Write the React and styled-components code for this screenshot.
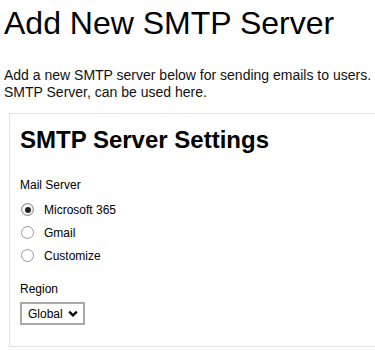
import React, { useState } from "react";
import styled, { createGlobalStyle } from "styled-components";

const GlobalStyle = createGlobalStyle`
  html, body {
    margin: 0;
    padding: 0;
    background: #ffffff;
    overflow: hidden;
  }
  body {
    font-family: "Liberation Sans", Arial, sans-serif;
    color: #000;
  }
`;

const servers = ["Microsoft 365", "Gmail", "Customize"];

const App = () => {
  const [server, setServer] = useState("Microsoft 365");

  return (
    <Page>
      <GlobalStyle />
      <Title>Add New SMTP Server</Title>
      <Intro>
        Add a new SMTP server below for sending emails to users.
        <br />
        SMTP Server, can be used here.
      </Intro>

      <Card>
        <CardTitle>SMTP Server Settings</CardTitle>

        <FieldLabel>Mail Server</FieldLabel>
        <RadioList>
          {servers.map((name) => (
            <RadioRow key={name}>
              <RadioInput
                type="radio"
                name="server"
                checked={server === name}
                onChange={() => setServer(name)}
              />
              <span>{name}</span>
            </RadioRow>
          ))}
        </RadioList>

        <FieldLabel>Region</FieldLabel>
        <SelectWrap>
          <Select defaultValue="Global">
            <option>Global</option>
            <option>US</option>
            <option>EU</option>
          </Select>
          <Chevron viewBox="0 0 10 8">
            <path d="M1.2 1.6 L5 5.4 L8.8 1.6" fill="none" stroke="#000" strokeWidth="2.2" />
          </Chevron>
        </SelectWrap>
      </Card>
    </Page>
  );
};

export default App;

const Page = styled.div`
  width: 375px;
  padding: 0 0 0 4px;
  box-sizing: border-box;
`;

const Title = styled.h1`
  margin: 0;
  padding-top: 3px;
  font-size: 32px;
  font-weight: 400;
  line-height: 40px;
  white-space: nowrap;
`;

const Intro = styled.p`
  margin: 24px 0 0;
  font-size: 14px;
  line-height: 17px;
  white-space: nowrap;
  color: #111;
`;

const Card = styled.div`
  margin: 12px 0 0 5px;
  width: 420px;
  border: 1px solid #e3e3e3;
  padding: 12px 10px 21px;
`;

const CardTitle = styled.h2`
  margin: 0 0 23px;
  font-size: 24px;
  font-weight: 700;
  line-height: 28px;
`;

const FieldLabel = styled.div`
  font-size: 12px;
  line-height: 16px;
  margin-bottom: 5px;
`;

const RadioList = styled.div`
  display: flex;
  flex-direction: column;
  margin-bottom: 14px;
`;

const RadioRow = styled.label`
  display: flex;
  align-items: center;
  gap: 10px;
  height: 23px;
  font-size: 12px;
`;

const RadioInput = styled.input`
  appearance: none;
  margin: 0 0 0 1px;
  width: 13px;
  height: 13px;
  border: 1px solid #999;
  border-radius: 50%;
  display: grid;
  place-items: center;
  box-sizing: border-box;

  &:checked {
    border-color: #888;
    box-shadow: inset 0 0 0 1px #ddd;
  }

  &:checked::after {
    content: "";
    width: 6px;
    height: 6px;
    border-radius: 50%;
    background: #222;
  }
`;

const SelectWrap = styled.div`
  position: relative;
  display: inline-block;
  vertical-align: top;
`;

const Select = styled.select`
  display: block;
  appearance: none;
  width: 65px;
  height: 23px;
  border: 2px solid #a9a9a9;
  border-radius: 0;
  background: #fff;
  padding: 0 0 0 6px;
  font-family: "Liberation Sans", Arial, sans-serif;
  font-size: 12px;
  color: #000;
`;

const Chevron = styled.svg`
  position: absolute;
  right: 7px;
  top: 8px;
  width: 10px;
  height: 8px;
  pointer-events: none;
`;
